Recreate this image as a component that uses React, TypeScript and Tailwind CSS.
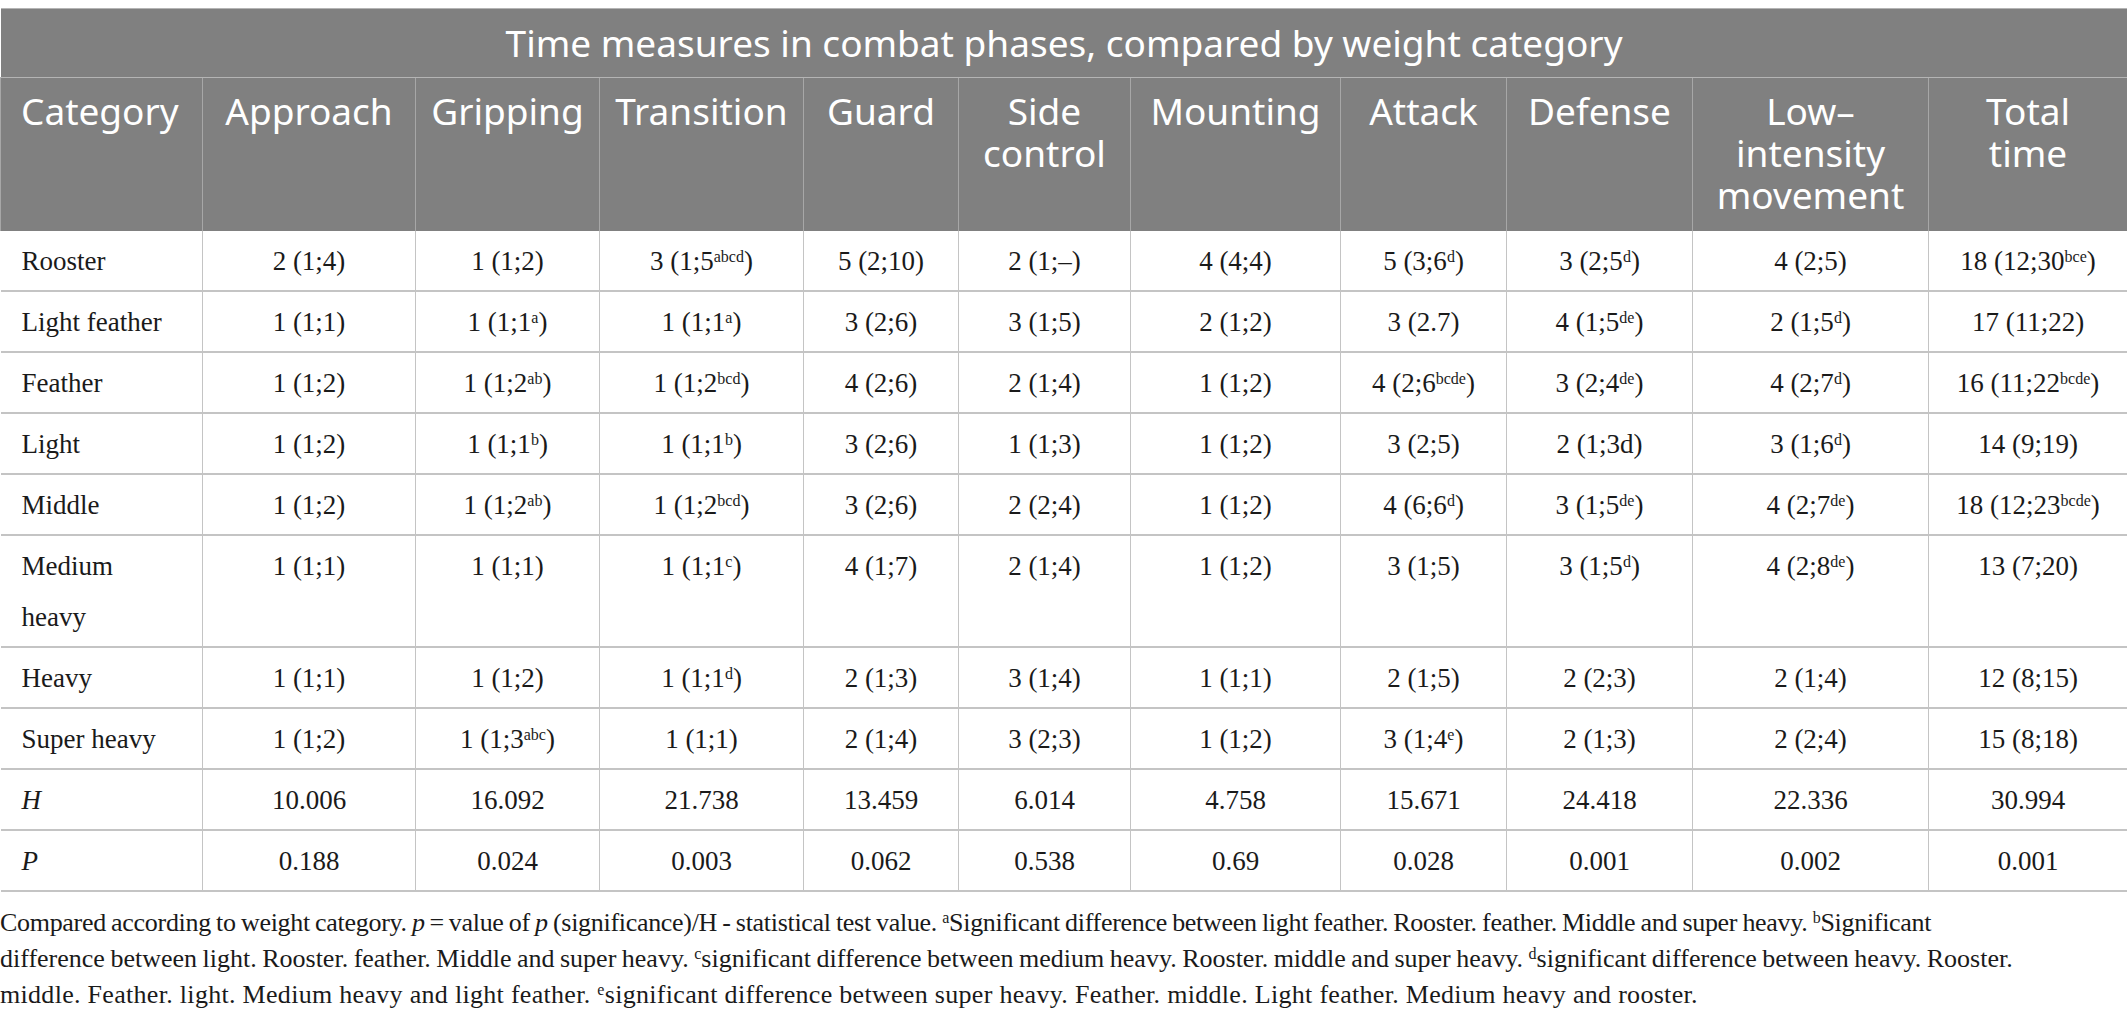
const columns = [
  { label: ["Category"], w: "w-[202px]" },
  { label: ["Approach"], w: "w-[213px]" },
  { label: ["Gripping"], w: "w-[184px]" },
  { label: ["Transition"], w: "w-[204px]" },
  { label: ["Guard"], w: "w-[155px]" },
  { label: ["Side", "control"], w: "w-[172px]" },
  { label: ["Mounting"], w: "w-[210px]" },
  { label: ["Attack"], w: "w-[166px]" },
  { label: ["Defense"], w: "w-[186px]" },
  { label: ["Low–", "intensity", "movement"], w: "w-[236px]" },
  { label: ["Total", "time"], w: "w-[199px]" },
];

// "^" marks where the superscript starts, it runs up to the closing bracket
const rows: { name: string[]; italic?: boolean; cells: string[] }[] = [
  { name: ["Rooster"], cells: ["2 (1;4)", "1 (1;2)", "3 (1;5^abcd)", "5 (2;10)", "2 (1;–)", "4 (4;4)", "5 (3;6^d)", "3 (2;5^d)", "4 (2;5)", "18 (12;30^bce)"] },
  { name: ["Light feather"], cells: ["1 (1;1)", "1 (1;1^a)", "1 (1;1^a)", "3 (2;6)", "3 (1;5)", "2 (1;2)", "3 (2.7)", "4 (1;5^de)", "2 (1;5^d)", "17 (11;22)"] },
  { name: ["Feather"], cells: ["1 (1;2)", "1 (1;2^ab)", "1 (1;2^bcd)", "4 (2;6)", "2 (1;4)", "1 (1;2)", "4 (2;6^bcde)", "3 (2;4^de)", "4 (2;7^d)", "16 (11;22^bcde)"] },
  { name: ["Light"], cells: ["1 (1;2)", "1 (1;1^b)", "1 (1;1^b)", "3 (2;6)", "1 (1;3)", "1 (1;2)", "3 (2;5)", "2 (1;3d)", "3 (1;6^d)", "14 (9;19)"] },
  { name: ["Middle"], cells: ["1 (1;2)", "1 (1;2^ab)", "1 (1;2^bcd)", "3 (2;6)", "2 (2;4)", "1 (1;2)", "4 (6;6^d)", "3 (1;5^de)", "4 (2;7^de)", "18 (12;23^bcde)"] },
  { name: ["Medium", "heavy"], cells: ["1 (1;1)", "1 (1;1)", "1 (1;1^c)", "4 (1;7)", "2 (1;4)", "1 (1;2)", "3 (1;5)", "3 (1;5^d)", "4 (2;8^de)", "13 (7;20)"] },
  { name: ["Heavy"], cells: ["1 (1;1)", "1 (1;2)", "1 (1;1^d)", "2 (1;3)", "3 (1;4)", "1 (1;1)", "2 (1;5)", "2 (2;3)", "2 (1;4)", "12 (8;15)"] },
  { name: ["Super heavy"], cells: ["1 (1;2)", "1 (1;3^abc)", "1 (1;1)", "2 (1;4)", "3 (2;3)", "1 (1;2)", "3 (1;4^e)", "2 (1;3)", "2 (2;4)", "15 (8;18)"] },
  { name: ["H"], italic: true, cells: ["10.006", "16.092", "21.738", "13.459", "6.014", "4.758", "15.671", "24.418", "22.336", "30.994"] },
  { name: ["P"], italic: true, cells: ["0.188", "0.024", "0.003", "0.062", "0.538", "0.69", "0.028", "0.001", "0.002", "0.001"] },
];

const Value = ({ text }: { text: string }) => {
  if (!text.includes("^")) return <>{text}</>;
  const [base, rest] = text.split("^");
  const sup = rest.replace(")", "");
  return (
    <>
      {base}
      <sup className="text-[16px]">{sup}</sup>)
    </>
  );
};

const Sup = ({ children }: { children: string }) => <sup className="text-[16px]">{children}</sup>;

export default function App() {
  return (
    <div className="w-[2127px] min-h-[1024px] bg-white pt-2 text-[#1a1a1a]">
      <table className="w-full table-fixed border-collapse">
        <colgroup>
          {columns.map((c, i) => (
            <col key={i} className={c.w} />
          ))}
        </colgroup>
        <thead className="font-['Noto_Sans',sans-serif] text-white">
          <tr>
            <th
              colSpan={11}
              className="h-[69px] border-t border-b border-[#b4b4b4] bg-[#808080] text-center align-middle text-[37px] font-normal leading-[42px]"
            >
              Time measures in combat phases, compared by weight category
            </th>
          </tr>
          <tr>
            {columns.map((c, i) => (
              <th
                key={i}
                className={`border-x border-[#a7a7a7] bg-[#808080] pb-[15px] pt-[12px] align-top text-[37px] font-normal leading-[42px] ${
                  i === 0 ? "pl-[20px] text-left" : "px-1 text-center"
                }`}
              >
                {c.label.map((l, j) => (
                  <div key={j} className="whitespace-nowrap">
                    {l}
                  </div>
                ))}
              </th>
            ))}
          </tr>
        </thead>
        <tbody className="font-['Liberation_Serif',serif] text-[27px] leading-[51px]">
          {rows.map((r, i) => (
            <tr key={i}>
              <td className="border-b-2 border-r border-[#c4c4c4] pb-[3px] pl-[21px] pt-[5px] align-top">
                {r.name.map((n, j) => (
                  <div key={j} className={r.italic ? "italic" : ""}>
                    {n}
                  </div>
                ))}
              </td>
              {r.cells.map((v, j) => (
                <td
                  key={j}
                  className="whitespace-nowrap border-x border-b-2 border-[#c4c4c4] pb-[3px] pt-[5px] text-center align-top"
                >
                  <Value text={v} />
                </td>
              ))}
            </tr>
          ))}
        </tbody>
      </table>
      <div className="mt-[13px] font-['Liberation_Serif',serif] text-[26px] leading-[36px] text-[#1a1a1a]">
        <div className="whitespace-nowrap tracking-[-0.3px] [word-spacing:-1px]">
          Compared according to weight category. <i>p</i>&#8201;=&#8201;value of <i>p</i> (significance)/H - statistical
          test value. <Sup>a</Sup>Significant difference between light feather. Rooster. feather. Middle and super heavy.{" "}
          <Sup>b</Sup>Significant
        </div>
        <div className="whitespace-nowrap [word-spacing:-1px]">
          difference between light. Rooster. feather. Middle and super heavy. <Sup>c</Sup>significant difference between
          medium heavy. Rooster. middle and super heavy. <Sup>d</Sup>significant difference between heavy. Rooster.
        </div>
        <div className="whitespace-nowrap tracking-[0.3px]">
          middle. Feather. light. Medium heavy and light feather. <Sup>e</Sup>significant difference between super heavy.
          Feather. middle. Light feather. Medium heavy and rooster.
        </div>
      </div>
    </div>
  );
}
